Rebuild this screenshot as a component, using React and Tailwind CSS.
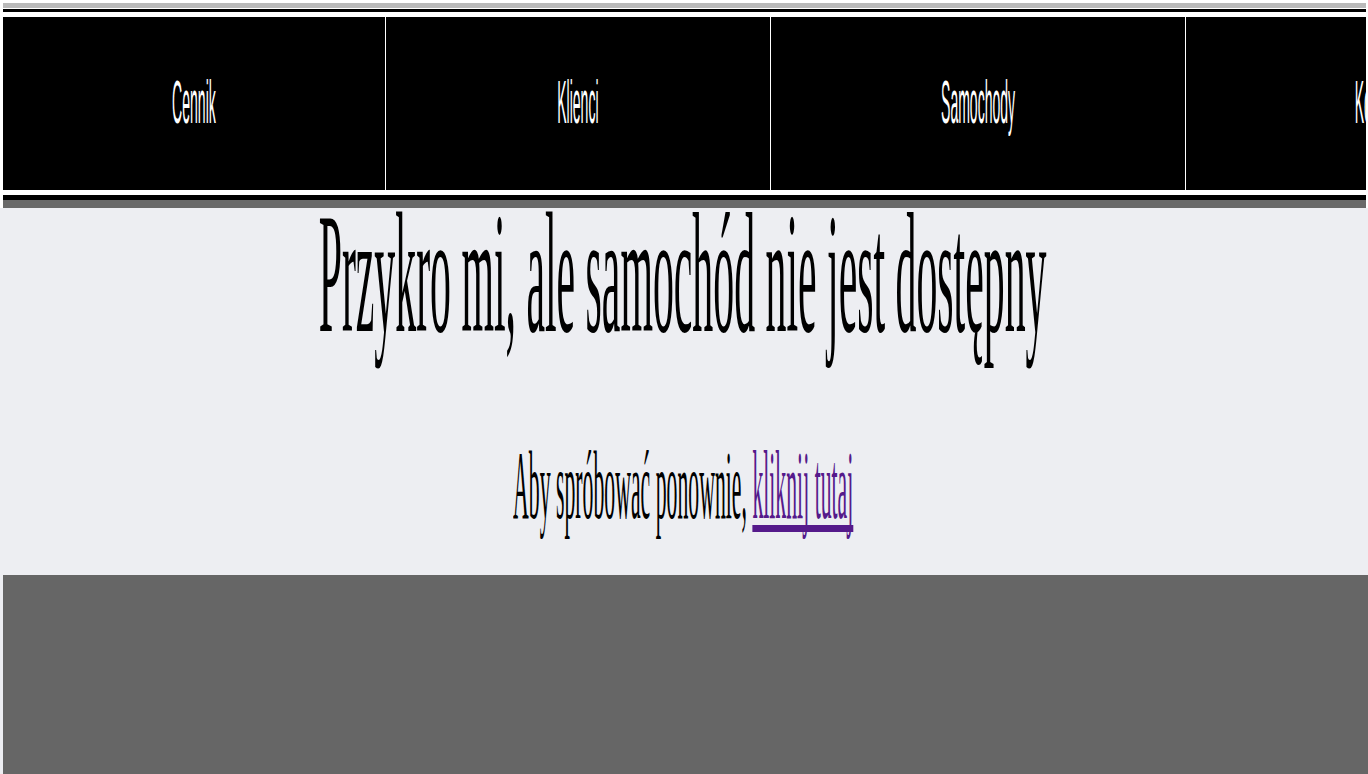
const NAV = [
  { label: 'Cennik', w: 'w-[382px]' },
  { label: 'Klienci', w: 'w-[384px]' },
  { label: 'Samochody', w: 'w-[414px]' },
  { label: 'Kontakt', w: 'w-[384px]' },
]

export default function App() {
  return (
    <div className="w-[1368px] h-[774px] overflow-hidden bg-white flex flex-col">
      {/* header */}
      <div className="pl-[3px] pr-[2px] bg-white">
        <div className="h-[3px]" />
        <div className="h-[5px] bg-[#bababa]" />
        <div className="h-[1px]" />
        <div className="h-[3px] bg-black" />
        <div className="h-[5px]" />
        <nav className="h-[173px] flex overflow-hidden bg-white gap-[1px]">
          {NAV.map(item => (
            <a
              key={item.label}
              href="#"
              className={`${item.w} shrink-0 h-full bg-black flex items-center justify-center pb-[3px]`}
            >
              <span className="shrink-0 whitespace-nowrap text-white text-[61px] leading-none font-['Liberation_Sans',Arial,sans-serif] scale-x-[0.23]">
                {item.label}
              </span>
            </a>
          ))}
        </nav>
        <div className="h-[5px]" />
        <div className="h-[5px] bg-black" />
        <div className="h-[8px] bg-[#696969]" />
      </div>

      {/* message */}
      <main className="h-[367px] bg-[#edeef2] pr-[2px] flex flex-col items-stretch font-['Liberation_Serif','Times_New_Roman',serif] text-black">
        <h1 className="flex justify-center overflow-visible">
          <span className="shrink-0 whitespace-nowrap text-[172px] leading-[130px] font-normal scale-x-[0.243]">
            Przykro mi, ale samochód nie jest dostępny
          </span>
        </h1>
        <p className="mt-[97px] flex justify-center">
          <span className="shrink-0 whitespace-nowrap text-[98px] leading-[100px] scale-x-[0.222]">
            Aby spróbować ponownie,{' '}
            <a
              href="#"
              className="text-[#551a8b] underline decoration-[#551a8b] decoration-[length:7px] underline-offset-[7px] [text-decoration-skip-ink:none]"
            >
              kliknij tutaj
            </a>
          </span>
        </p>
      </main>

      {/* footer */}
      <div className="flex-1 bg-[#edeef2] pl-[3px]">
        <div className="h-full bg-[#666666]" />
      </div>
    </div>
  )
}
